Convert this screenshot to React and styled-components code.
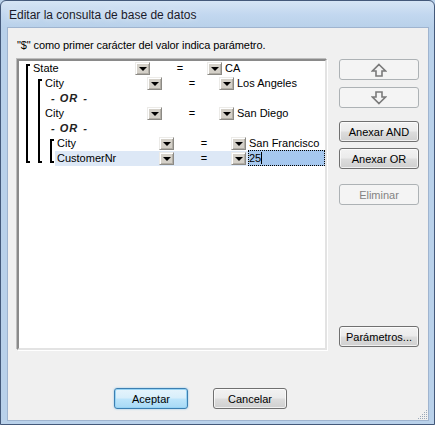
import React from "react";
import styled, { createGlobalStyle, css } from "styled-components";

const Global = createGlobalStyle`
  html, body { margin: 0; padding: 0; background: #b9d1ea; }
  body { font-family: "Liberation Sans", Arial, sans-serif; font-size: 11px; color: #000; }
  * { box-sizing: border-box; }
`;

const Window = styled.div`
  width: 435px;
  height: 425px;
  border: 1px solid #44597a;
  border-radius: 6px 6px 0 0;
  background: linear-gradient(#d6e5f5 0px, #c2d7ef 14px, #b9d1ea 26px, #b9d1ea 100%);
  display: flex;
  flex-direction: column;
  overflow: hidden;
`;

const TitleBar = styled.div`
  height: 26px;
  flex: none;
  display: flex;
  align-items: center;
  padding: 1px 0 0 8px;
  font-size: 12px;
  color: #1a1a2a;
  text-shadow: 0 0 6px rgba(255, 255, 255, 0.8);
`;

const Client = styled.div`
  position: relative;
  flex: 1;
  margin: 0 5px 3px 6px;
  border: 1px solid #9fb4cf;
  background: #f0f0f0;
  display: flex;
  flex-direction: column;
`;

const Hint = styled.div`
  height: 13px;
  line-height: 13px;
  margin: 11px 9px 7px 9px;
  letter-spacing: -0.1px;
`;

const MainRow = styled.div`
  display: flex;
  gap: 12px;
  padding: 0 9px;
`;

const ListBox = styled.div`
  flex: 1;
  height: 291px;
  background: #fff;
  border: 2px solid;
  border-color: #8a8a8a #e3e3e3 #e3e3e3 #8a8a8a;
  box-shadow: -1px -1px 0 0 #bdbdbd, 1px 1px 0 0 #fff;
  overflow: hidden;
`;

const Group = styled.div`
  display: flex;
  padding-left: 7px;
`;

const Bracket = styled.div`
  flex: none;
  width: 4px;
  margin: 3px 1px 3px 0;
  border: 2px solid #000;
  border-right: none;
`;

const GroupBody = styled.div`
  flex: 1;
  min-width: 0;
  display: flex;
  flex-direction: column;
`;

const Row = styled.div`
  height: 15px;
  display: grid;
  grid-template-columns: 104px 15px 57px 15px 1fr;
  align-items: center;
  line-height: 15px;
  white-space: nowrap;
  ${(p) => p.$selected && css`background: #dde8f6;`}
`;

const Name = styled.span`
  padding-left: 2px;
`;

const Eq = styled.span`
  text-align: center;
  padding-left: 3px;
`;

const DropBtn = styled.span`
  width: 15px;
  height: 13px;
  display: flex;
  align-items: center;
  justify-content: center;
  background: #d4d0c8;
  border: 1px solid;
  border-color: #ecebe8 #8c8a85 #8c8a85 #ecebe8;
  box-shadow: inset 1px 1px 0 #fff, inset -1px -1px 0 #b2aea6;
  &::after {
    content: "";
    border-left: 4px solid transparent;
    border-right: 4px solid transparent;
    border-top: 4px solid #000;
    margin-top: 1px;
  }
`;

const Value = styled.span`
  margin-left: 2px;
  padding-left: 1px;
  height: 15px;
  display: flex;
  align-items: center;
  ${(p) => p.$editing && css`
    background: #a6c8ef;
    border: 1px dotted #000;
    padding-left: 0;
    height: 16px;
    margin-top: -1px;
  `}
`;

const Caret = styled.span`
  width: 1px;
  height: 12px;
  background: #000;
`;

const OrRow = styled.div`
  height: 15px;
  line-height: 15px;
  padding-left: 8px;
  font-style: italic;
  font-weight: bold;
  font-size: 11px;
  color: #222;
  word-spacing: 2px;
  span { letter-spacing: 1px; }
`;

const ButtonCol = styled.div`
  width: 80px;
  flex: none;
  display: flex;
  flex-direction: column;
`;

const Button = styled.button`
  font-family: inherit;
  font-size: 11px;
  height: 21px;
  width: ${(p) => p.$w || 80}px;
  padding: 0;
  margin-top: ${(p) => p.$mt || 0}px;
  border-radius: 3px;
  border: 1px solid #707070;
  color: #000;
  display: flex;
  align-items: center;
  justify-content: center;
  background: linear-gradient(#f2f2f2 0%, #ebebeb 48%, #dddddd 52%, #cfcfcf 100%);
  box-shadow: inset 0 0 0 1px rgba(255, 255, 255, 0.7);
  ${(p) => p.$disabled && css`
    border-color: #adb2b5;
    background: #f4f4f4;
    color: #838383;
    box-shadow: none;
  `}
  ${(p) => p.$default && css`
    border-color: #3c7fb1;
    background: linear-gradient(#e5f4fc 0%, #d7eefb 48%, #bde5fb 52%, #a7d9f5 100%);
    box-shadow: inset 0 0 0 1px #98d4f5, 0 0 2px rgba(60, 160, 230, 0.6);
  `}
`;

const Footer = styled.div`
  display: flex;
  gap: 25px;
  margin-top: 38px;
  padding-left: 106px;
`;

const Grip = styled.svg`
  position: absolute;
  right: 0;
  bottom: 0;
`;

const UpArrow = () => (
  <svg width="16" height="14" viewBox="0 0 16 14">
    <polygon points="8,1.5 14.5,8 11,8 11,13 5,13 5,8 1.5,8" fill="none" stroke="#7a7a7a" strokeWidth="1.6" strokeLinejoin="miter" />
  </svg>
);

const DownArrow = () => (
  <svg width="16" height="14" viewBox="0 0 16 14">
    <polygon points="8,12.5 14.5,6 11,6 11,1 5,1 5,6 1.5,6" fill="none" stroke="#7a7a7a" strokeWidth="1.6" strokeLinejoin="miter" />
  </svg>
);

const Cond = ({ name, value, selected, editing }) => (
  <Row $selected={selected}>
    <Name>{name}</Name>
    <DropBtn />
    <Eq>=</Eq>
    <DropBtn />
    <Value $editing={editing}>
      {value}
      {editing && <Caret />}
    </Value>
  </Row>
);

const Or = () => (
  <OrRow>
    - <span>OR</span> -
  </OrRow>
);

export default function App() {
  return (
    <>
      <Global />
      <Window>
        <TitleBar>Editar la consulta de base de datos</TitleBar>
        <Client>
          <Hint>"$" como primer carácter del valor indica parámetro.</Hint>
          <MainRow>
            <ListBox>
              <Group>
                <Bracket />
                <GroupBody>
                  <Cond name="State" value="CA" />
                  <Group>
                    <Bracket />
                    <GroupBody>
                      <Cond name="City" value="Los Angeles" />
                      <Or />
                      <Cond name="City" value="San Diego" />
                      <Or />
                      <Group>
                        <Bracket />
                        <GroupBody>
                          <Cond name="City" value="San Francisco" />
                          <Cond name="CustomerNr" value="25" selected editing />
                        </GroupBody>
                      </Group>
                    </GroupBody>
                  </Group>
                </GroupBody>
              </Group>
            </ListBox>
            <ButtonCol>
              <Button $disabled aria-label="Subir"><UpArrow /></Button>
              <Button $disabled $mt={7} aria-label="Bajar"><DownArrow /></Button>
              <Button $mt={13}>Anexar AND</Button>
              <Button $mt={6}>Anexar OR</Button>
              <Button $disabled $mt={15}>Eliminar</Button>
              <Button style={{ marginTop: "auto", marginBottom: 3 }}>Parámetros...</Button>
            </ButtonCol>
          </MainRow>
          <Footer>
            <Button $default $w={74}>Aceptar</Button>
            <Button $w={74}>Cancelar</Button>
          </Footer>
          <Grip width="11" height="11" viewBox="0 0 11 11">
            <g fill="#9aa8b8">
              <rect x="9" y="1" width="1" height="1" />
              <rect x="7" y="3" width="1" height="1" />
              <rect x="9" y="3" width="1" height="1" />
              <rect x="5" y="5" width="1" height="1" />
              <rect x="7" y="5" width="1" height="1" />
              <rect x="9" y="5" width="1" height="1" />
              <rect x="3" y="7" width="1" height="1" />
              <rect x="5" y="7" width="1" height="1" />
              <rect x="7" y="7" width="1" height="1" />
              <rect x="9" y="7" width="1" height="1" />
              <rect x="1" y="9" width="1" height="1" />
              <rect x="3" y="9" width="1" height="1" />
              <rect x="5" y="9" width="1" height="1" />
              <rect x="7" y="9" width="1" height="1" />
              <rect x="9" y="9" width="1" height="1" />
            </g>
          </Grip>
        </Client>
      </Window>
    </>
  );
}
